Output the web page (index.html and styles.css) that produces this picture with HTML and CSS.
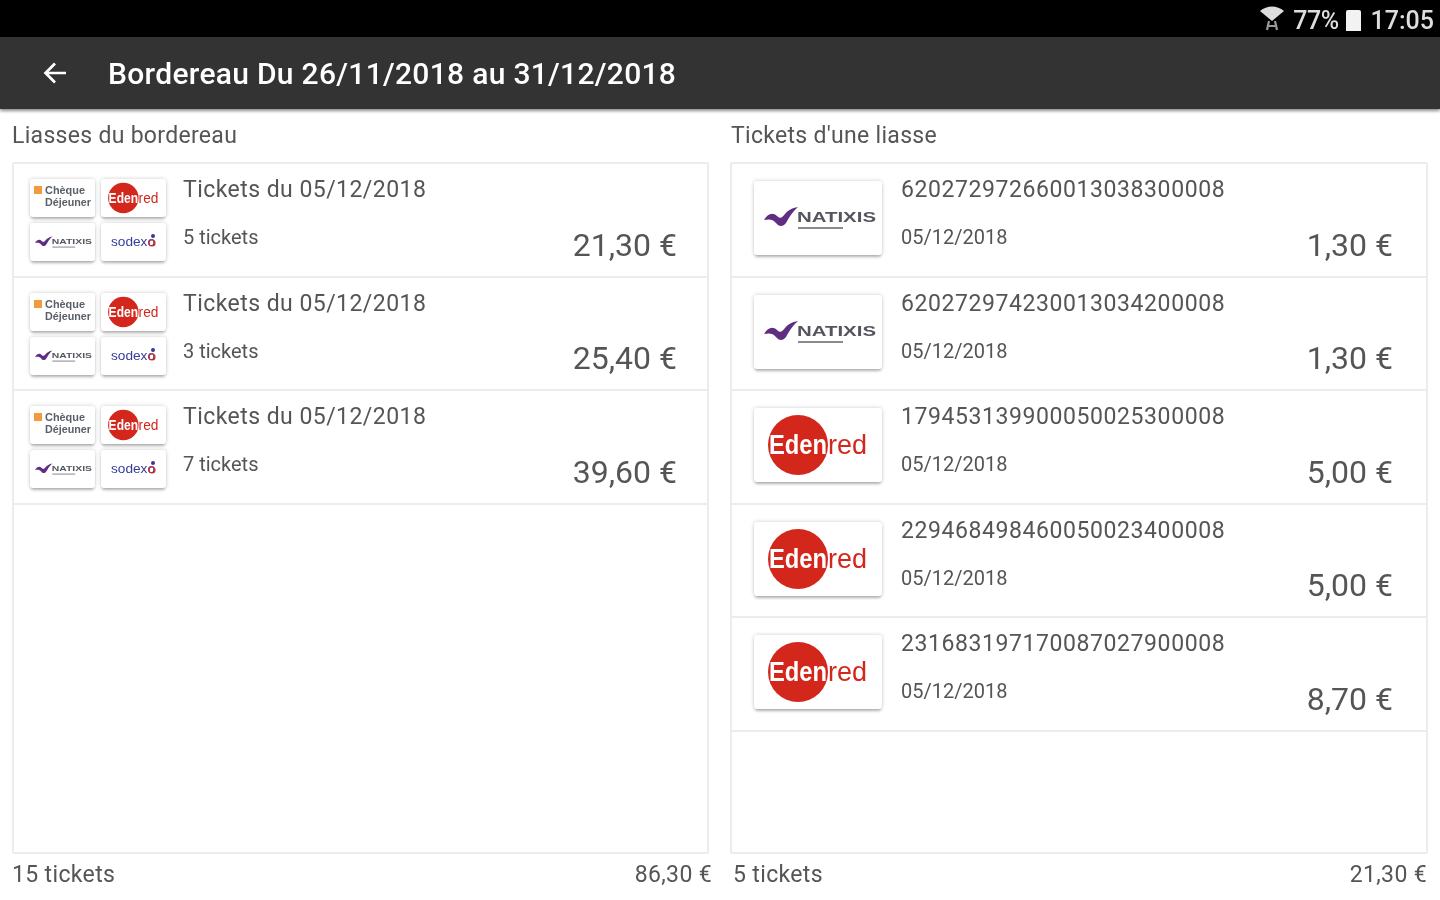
FILE: index.html
```html
<!DOCTYPE html>
<html lang="fr">
<head>
  <meta charset="UTF-8" />
  <meta name="viewport" content="width=device-width, initial-scale=1.0" />
  <title>Bordereau</title>
  <link rel="stylesheet" href="styles.css">
</head>
<body>
  <svg class="defs" width="0" height="0" aria-hidden="true">
    <defs>
      <symbol id="logoNatixis" viewBox="0 0 128 74">
        <path d="M10 39 C14 32 19 31 23 35 C26 38 28 37 31 33 C33 30 38 27 44 26 C38 31 35 37 32 42 C29 46 25 46 22 42 C19 38 15 38 10 39 Z" fill="#5f2d82"/>
        <text x="43" y="41" font-family="Liberation Sans" font-size="15" font-weight="700" textLength="79" lengthAdjust="spacingAndGlyphs" fill="#55555f">NATIXIS</text>
        <rect x="44" y="46" width="45" height="2" fill="#8a8a90"/>
      </symbol>
      <symbol id="logoEdenred" viewBox="0 0 128 74">
        <circle cx="44" cy="37" r="30" fill="#d3271c"/>
        <text x="15" y="46" font-family="Liberation Sans" font-size="27" font-weight="700" textLength="58" lengthAdjust="spacingAndGlyphs" fill="#fff">Eden</text>
        <text x="74" y="46" font-family="Liberation Sans" font-size="27" textLength="39" lengthAdjust="spacingAndGlyphs" fill="#d3271c">red</text>
      </symbol>
      <symbol id="logoCheque" viewBox="0 0 65 38">
        <rect x="4" y="7" width="8" height="8" fill="#f29a3c"/>
        <text x="15" y="15" font-family="Liberation Sans" font-size="10.500" font-weight="700" textLength="40" lengthAdjust="spacingAndGlyphs" fill="#5a6068">Chèque</text>
        <text x="15" y="27" font-family="Liberation Sans" font-size="10.500" font-weight="700" textLength="46" lengthAdjust="spacingAndGlyphs" fill="#5a6068">Déjeuner</text>
      </symbol>
      <symbol id="logoSodexo" viewBox="0 0 65 38">
        <text x="10" y="23" font-family="Liberation Sans" font-size="12" textLength="44" lengthAdjust="spacingAndGlyphs" fill="#343a9c">sodexo</text>
        <circle cx="52" cy="13" r="2" fill="#343a9c"/>
        <circle cx="51" cy="20" r="3" fill="none" stroke="#d3271c" stroke-width="1.200"/>
      </symbol>
    </defs>
  </svg>

  <div class="statusbar">
    <svg class="wifi" width="26" height="26" viewBox="0 0 26 26">
      <path d="M1 6 C8 0 18 0 25 6 L13 16 Z" fill="#ddd"/>
      <path d="M10 16 L8 25 M16 16 L18 25 M9 21 H17" stroke="#999" stroke-width="2.200" fill="none"/>
    </svg>
    <span class="pct">77%</span>
    <span class="battery"></span>
    <span class="clock">17:05</span>
  </div>
  <header class="toolbar">
    <svg class="back" width="26" height="26" viewBox="0 0 26 26">
      <path d="M24 13 H4 M13 3.500 L3.500 13 L13 22.500" fill="none" stroke="#fff" stroke-width="2.700"/>
    </svg>
    <h1>Bordereau Du 26/11/2018 au 31/12/2018</h1>
  </header>

  <main class="columns">
    <section class="col">
      <h2>Liasses du bordereau</h2>
      <div class="panel">
        <div class="row">
          <div class="logos">
            <div class="tile tile-sm"><svg><use href="#logoCheque"/></svg></div>
            <div class="tile tile-sm"><svg><use href="#logoEdenred"/></svg></div>
            <div class="tile tile-sm"><svg><use href="#logoNatixis"/></svg></div>
            <div class="tile tile-sm"><svg><use href="#logoSodexo"/></svg></div>
          </div>
          <div class="info"><div class="main">Tickets du 05/12/2018</div><div class="sub">5 tickets</div></div>
          <div class="amount">21,30 €</div>
        </div>
        <div class="row">
          <div class="logos">
            <div class="tile tile-sm"><svg><use href="#logoCheque"/></svg></div>
            <div class="tile tile-sm"><svg><use href="#logoEdenred"/></svg></div>
            <div class="tile tile-sm"><svg><use href="#logoNatixis"/></svg></div>
            <div class="tile tile-sm"><svg><use href="#logoSodexo"/></svg></div>
          </div>
          <div class="info"><div class="main">Tickets du 05/12/2018</div><div class="sub">3 tickets</div></div>
          <div class="amount">25,40 €</div>
        </div>
        <div class="row">
          <div class="logos">
            <div class="tile tile-sm"><svg><use href="#logoCheque"/></svg></div>
            <div class="tile tile-sm"><svg><use href="#logoEdenred"/></svg></div>
            <div class="tile tile-sm"><svg><use href="#logoNatixis"/></svg></div>
            <div class="tile tile-sm"><svg><use href="#logoSodexo"/></svg></div>
          </div>
          <div class="info"><div class="main">Tickets du 05/12/2018</div><div class="sub">7 tickets</div></div>
          <div class="amount">39,60 €</div>
        </div>
      </div>
      <div class="totals"><span>15 tickets</span><span>86,30 €</span></div>
    </section>

    <section class="col col-right">
      <h2>Tickets d'une liasse</h2>
      <div class="panel">
        <div class="row">
          <div class="tile tile-lg"><svg><use href="#logoNatixis"/></svg></div>
          <div class="info"><div class="main">620272972660013038300008</div><div class="sub">05/12/2018</div></div>
          <div class="amount">1,30 €</div>
        </div>
        <div class="row">
          <div class="tile tile-lg"><svg><use href="#logoNatixis"/></svg></div>
          <div class="info"><div class="main">620272974230013034200008</div><div class="sub">05/12/2018</div></div>
          <div class="amount">1,30 €</div>
        </div>
        <div class="row">
          <div class="tile tile-lg"><svg><use href="#logoEdenred"/></svg></div>
          <div class="info"><div class="main">179453139900050025300008</div><div class="sub">05/12/2018</div></div>
          <div class="amount">5,00 €</div>
        </div>
        <div class="row">
          <div class="tile tile-lg"><svg><use href="#logoEdenred"/></svg></div>
          <div class="info"><div class="main">229468498460050023400008</div><div class="sub">05/12/2018</div></div>
          <div class="amount">5,00 €</div>
        </div>
        <div class="row">
          <div class="tile tile-lg"><svg><use href="#logoEdenred"/></svg></div>
          <div class="info"><div class="main">231683197170087027900008</div><div class="sub">05/12/2018</div></div>
          <div class="amount">8,70 €</div>
        </div>
      </div>
      <div class="totals"><span>5 tickets</span><span>21,30 €</span></div>
    </section>
  </main>
</body>
</html>
```

FILE: styles.css
```css
* { margin: 0; padding: 0; box-sizing: border-box; }
html, body {
  width: 100%; height: 100%; overflow: hidden;
  background: #fff; font-family: Roboto, 'Liberation Sans', sans-serif;
  color: #555;
}
.defs { display: block; height: 0; }

/* the reference is an upscaled capture, everything is a bit soft */
.statusbar, .toolbar h1, .back, .columns { filter: blur(0.7px); }

.statusbar {
  height: 37px; background: #000; color: #ddd;
  display: flex; align-items: center; justify-content: flex-end;
  padding: 3px 6px 0 0; font-size: 25px; font-weight: 500;
}
.wifi { margin-right: 8px; margin-top: -5px; }
.pct { margin-right: 7px; letter-spacing: -0.5px; }
.battery {
  width: 15px; height: 21px; background: #f2f2f2; margin-right: 10px; border-radius: 2px 2px 0 0;
}

.toolbar {
  height: 72px; background: #333;
  display: flex; align-items: center;
  padding-left: 42px;
  box-shadow: 0 2px 3px rgba(0,0,0,0.45);
  position: relative;
}
.back { margin-right: 40px; }
.toolbar h1 { color: #fff; font-size: 30px; font-weight: 500; white-space: nowrap; letter-spacing: 0.3px; }

.columns {
  display: grid; grid-template-columns: 697px 698px; column-gap: 21px;
  padding: 0 12px;
}
.col h2 {
  font-size: 23px; font-weight: 400; height: 53px; line-height: 54px;
  letter-spacing: 0.3px;
}
.col-right h2 { padding-left: 1px; }
.panel {
  height: 692px; border: 2px solid #ececec; border-radius: 2px;
}
.row {
  height: 113.6px; border-bottom: 2px solid #ececec;
  display: flex; align-items: flex-start;
}
.logos {
  width: 137px; margin: 15px 0 0 16px;
  display: grid; grid-template-columns: 65px 65px; gap: 6px;
}
.tile {
  background: #fff; border-radius: 3px;
  box-shadow: 0 0 4px rgba(0,0,0,0.2), 0 3px 3px -1px rgba(0,0,0,0.25);
}
.tile svg { display: block; width: 100%; height: 100%; }
.tile-sm { height: 38px; }
.tile-lg { width: 128px; height: 74px; margin: 17px 19px 0 22px; flex-shrink: 0; }

.info { flex: 1; padding-top: 10px; }
.logos + .info { padding-left: 16px; }
.main { font-size: 23px; line-height: 32px; letter-spacing: 0.45px; }
.col-right .main { letter-spacing: 0.58px; }
.sub { font-size: 20px; line-height: 32px; margin-top: 15px; }
.amount {
  font-size: 32px; align-self: flex-end; margin: 0 30px 13px 0; line-height: 36px;
}
.col-right .amount { margin-right: 33px; }

.totals {
  display: flex; justify-content: space-between;
  font-size: 23px; line-height: 30px; padding-top: 6px; margin-right: -3px;
  letter-spacing: 0.35px;
}
.col-right .totals { padding-left: 3px; margin-right: 1px; }
```
